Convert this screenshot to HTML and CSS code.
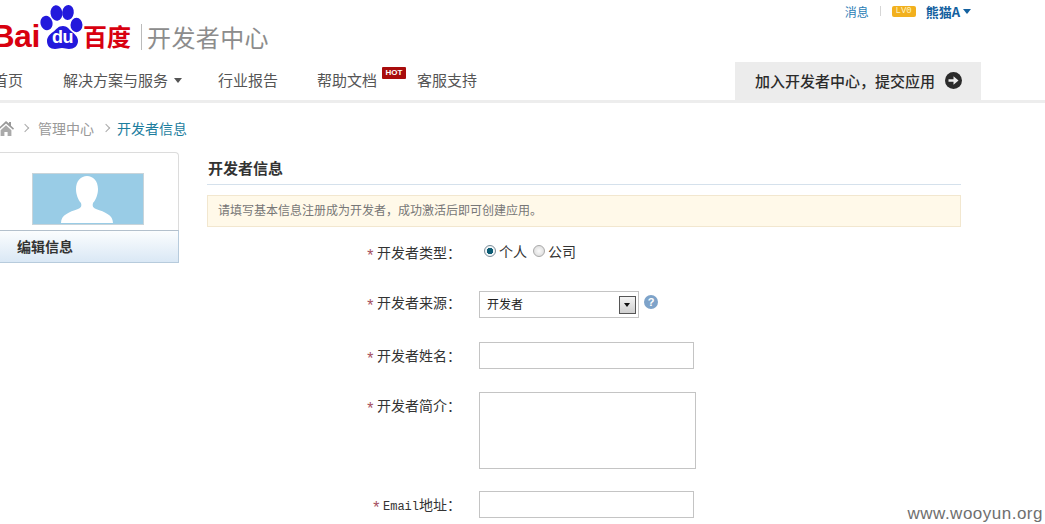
FILE: index.html
```html
<!DOCTYPE html>
<html lang="zh-CN">
<head>
<meta charset="utf-8">
<title>开发者信息</title>
<link rel="stylesheet" href="styles.css">
</head>
<body>
<header class="header">
  <div class="wrap">
    <div class="top">
      <a class="logo">
        <span class="logo-bai">Bai</span>
        <svg class="paw" width="44" height="46" viewBox="0 0 44 46" aria-hidden="true">
          <ellipse cx="6.5" cy="20" rx="6" ry="7.2" fill="#2319dc" transform="rotate(-14 6.5 20)"/>
          <ellipse cx="16.5" cy="10" rx="6" ry="7.8" fill="#2319dc" transform="rotate(-8 16.5 10)"/>
          <ellipse cx="28" cy="9.5" rx="5.8" ry="7.6" fill="#2319dc" transform="rotate(6 28 9.5)"/>
          <ellipse cx="36.5" cy="22" rx="6" ry="7.2" fill="#2319dc"/>
          <path d="M23 23c4 0 6 3 8 5 4 3 7 6 7 10 0 5-4 8-9 8-3 0-4-1-7-1s-4 1-7 1c-5 0-8-3-8-8 0-4 3-7 6-9 4-3 5-6 10-6z" fill="#2319dc"/>
          <text x="22.5" y="40" class="paw-du">du</text>
        </svg>
        <span class="logo-cn">百度</span>
        <span class="logo-title">开发者中心</span>
      </a>
      <div class="user">
        <a class="msg">消息</a>
        <i class="user-sep"></i>
        <span class="lv">LV0</span>
        <a class="uname">熊猫A</a>
        <i class="caret caret-blue"></i>
      </div>
    </div>
    <nav class="nav">
      <a class="nav-item nav-home">首页</a>
      <a class="nav-item nav-solve">解决方案与服务<i class="caret caret-gray"></i></a>
      <a class="nav-item nav-report">行业报告</a>
      <a class="nav-item nav-help">帮助文档<span class="hot">HOT</span></a>
      <a class="nav-item nav-support">客服支持</a>
      <a class="cta">加入开发者中心，提交应用
        <svg class="cta-icon" width="17" height="17" viewBox="0 0 17 17" aria-hidden="true">
          <circle cx="8.5" cy="8.5" r="8.5" fill="#2b2b2b"/>
          <path d="M3.5 7.2h5V4.2l5 4.3-5 4.3v-3h-5z" fill="#ececec"/>
        </svg>
      </a>
    </nav>
  </div>
</header>

<div class="wrap">
  <div class="crumb">
    <svg class="home" width="16" height="16" viewBox="0 0 16 16" aria-hidden="true">
      <path d="M8 1 0 8.5l1 1.2L8 3.4l7 6.3 1-1.2-3-2.8V2h-2v1.6z" fill="#999"/>
      <path d="M2.6 10.2 8 5.3l5.4 4.9V16H9.6v-4H6.4v4H2.6z" fill="#aaa"/>
    </svg>
    <span class="crumb-sep"></span>
    <a class="crumb-link">管理中心</a>
    <span class="crumb-sep"></span>
    <span class="crumb-now">开发者信息</span>
  </div>

  <div class="content">
    <aside class="side">
      <div class="side-photo">
        <div class="avatar">
          <svg width="110" height="49" viewBox="0 0 110 49" aria-hidden="true">
            <path d="M28 49c0-8 8-11 17-14 3-1 4-3 3-6-3-3-5-9-5-14 0-8 5-13 11-13s11 5 11 13c0 5-2 11-5 14-1 3 0 5 3 6 9 3 17 6 17 14z" fill="#fff"/>
          </svg>
        </div>
      </div>
      <a class="side-item">编辑信息</a>
    </aside>

    <main class="main">
      <h2 class="title">开发者信息</h2>
      <p class="notice">请填写基本信息注册成为开发者，成功激活后即可创建应用。</p>
      <form class="form">
        <div class="row row-type">
          <label class="label"><b>*</b>开发者类型：</label>
          <div class="radios">
            <span class="radio radio-on"></span><span>个人</span>
            <span class="radio"></span><span>公司</span>
          </div>
        </div>
        <div class="row row-source">
          <label class="label"><b>*</b>开发者来源：</label>
          <div class="select">
            <span class="select-text">开发者</span>
            <i class="select-btn"></i>
          </div>
          <span class="help">?</span>
        </div>
        <div class="row row-name">
          <label class="label"><b>*</b>开发者姓名：</label>
          <div class="input"></div>
        </div>
        <div class="row row-intro">
          <label class="label"><b>*</b>开发者简介：</label>
          <div class="textarea"></div>
        </div>
        <div class="row row-email">
          <label class="label"><b>*</b><span class="mono">Email</span>地址：</label>
          <div class="input"></div>
        </div>
      </form>
    </main>
  </div>
</div>
<div class="watermark">www.wooyun.org</div>
</body>
</html>
```
FILE: styles.css
```css
* { box-sizing: border-box; }
html, body { margin: 0; height: 524px; overflow: hidden; background: #fff; }
body {
  font-family: "Noto Sans CJK SC", "Liberation Sans", sans-serif;
  color: #333;
  font-size: 14px;
  position: relative;
}
i { display: block; }
.wrap { width: 1000px; margin-left: -19px; }

.header { height: 103px; border-bottom: 3px solid #ededed; }
.top { height: 62px; display: flex; justify-content: space-between; align-items: flex-start; }

.logo { display: flex; align-items: flex-start; height: 62px; }
.logo-bai { font: 700 32px/30px "Liberation Sans", sans-serif; color: #d8000f; margin-top: 21px; letter-spacing: -0.4px; width: 59px; text-align: right; flex: none; }
.paw { flex: none; margin-top: 3px; }
.logo-cn { font: 700 24px/30px "Noto Sans CJK SC", sans-serif; color: #d8000f; margin-top: 21px; margin-left: -1px; }
.paw-du { font: 700 18px "Liberation Sans", sans-serif; fill: #fff; text-anchor: middle; letter-spacing: -.5px; }
.logo-title { font-size: 24px; line-height: 26px; letter-spacing: .4px; color: #8c8c8c; margin: 24px 0 0 10px; padding-left: 5px; border-left: 1px solid #bbb; white-space: nowrap; }

.user { display: flex; align-items: center; height: 22px; margin-right: 10px; font-size: 12px; }
.msg { color: #2a7db5; }
.user-sep { width: 1px; height: 10px; background: #d6d6d6; margin: 0 11px; }
.lv { width: 24px; height: 11px; border-radius: 2px; background: #f2b01e; color: #fff3c0; font: 9px/11px "Liberation Mono", monospace; text-align: center; }
.uname { color: #14619f; font-weight: 700; font-size: 13px; margin-left: 10px; }
.caret { width: 0; height: 0; border-style: solid; border-color: transparent; }
.caret-blue { border-width: 5px 4px 0; border-top-color: #14619f; margin-left: 3px; }
.caret-gray { border-width: 5px 4.5px 0; border-top-color: #555; margin-left: 6px; }

.nav { display: flex; align-items: center; height: 38px; font-size: 15px; color: #555; }
.nav-item { display: flex; align-items: center; white-space: nowrap; line-height: 36px; padding-bottom: 2px; color: #555; }
.nav-home { margin-left: 12px; }
.nav-solve { margin-left: 40px; }
.nav-report { margin-left: 36px; }
.nav-help { margin-left: 39px; position: relative; }
.nav-support { margin-left: 40px; }
.hot { position: absolute; left: 65px; top: 5px; width: 24px; height: 12px; background: #a80c0c; color: #fff; font: 700 8px/12px "Liberation Sans", sans-serif; text-align: center; border-radius: 1px; }
.cta { margin-left: auto; width: 246px; height: 38px; background: #ececec; color: #2b2b2b; font-size: 15px; display: flex; align-items: center; padding: 0 0 2px 20px; gap: 10px; white-space: nowrap; font-weight: 500; }
.cta-icon { flex: none; }

.crumb { display: flex; align-items: center; height: 20px; margin-top: 15px; padding-left: 19px; color: #999; }
.home { margin-left: -2px; flex: none; }
.crumb-sep { width: 6px; height: 6px; border-top: 1px solid #aaa; border-right: 1px solid #aaa; transform: rotate(45deg); margin: 0 10px 0 8px; }
.crumb-link { color: #999; }
.crumb-now { color: #1c7d9e; }
.crumb-link + .crumb-sep { margin-left: 9px; margin-right: 8px; }

.content { display: flex; margin-top: 14px; }
.side { width: 198px; flex: none; }
.side-photo { height: 78px; border: 1px solid #dcdcdc; border-bottom: 0; border-radius: 0 4px 0 0; padding: 20px 0 0 50px; }
.avatar { width: 112px; height: 52px; border: 1px solid #c8d4da; background: #99cce6; overflow: hidden; }
.avatar svg { display: block; }
.side-item { display: block; height: 33px; border: 1px solid #b7cbdc; border-top-color: #b3c0cc; background: linear-gradient(#fbfdfe, #dae8f5); font-weight: 700; font-size: 14px; line-height: 31px; padding-left: 35px; color: #333; }

.main { width: 754px; margin-left: 28px; flex: none; }
.title { margin: 0; height: 33px; font-size: 15px; line-height: 32px; font-weight: 700; color: #333; padding-left: 1px; border-bottom: 1px solid #d5e1ec; }
.notice { margin: 10px 0 0; height: 32px; border: 1px solid #f2e7cf; background: #fff9e9; color: #777; font-size: 12px; line-height: 28px; padding-left: 10px; }

.row { display: flex; align-items: flex-start; }
.label { width: 272px; flex: none; padding-right: 18px; text-align: right; font-size: 14px; line-height: 27px; color: #333; white-space: nowrap; }
.label b { color: #a5505f; font-weight: 400; font-size: 16px; margin-right: 2px; font-family: "Liberation Mono", monospace; vertical-align: -3px; line-height: 1; }
.mono { font: 12px "Liberation Mono", monospace; }

.row-type { margin-top: 12px; height: 27px; }
.row-source { margin-top: 25px; height: 27px; }
.row-source .label { line-height: 23px; }
.row-name { margin-top: 24px; height: 27px; }
.row-intro { margin-top: 23px; height: 77px; }
.row-email { margin-top: 22px; height: 27px; }

.radios { display: flex; align-items: center; height: 24px; margin-left: 5px; }
.radio { width: 12px; height: 12px; border-radius: 50%; border: 1px solid #a9a9a9; background: radial-gradient(#fafafa, #d6d6d6); margin-right: 3px; }
.radios span + .radio { margin-left: 6px; }
.radio-on { background: radial-gradient(circle, #0d5c74 0 3px, #f2f6f8 3.5px); border-color: #7a8c98; }

.select { width: 160px; height: 27px; border: 1px solid #c4c4c4; display: flex; align-items: center; justify-content: space-between; font-size: 12px; padding: 0 2px 0 7px; color: #222; background: #fff; }
.select-text { padding-bottom: 2px; }
.select-btn { width: 17px; height: 18px; border: 1px solid #555; background: linear-gradient(#f4f4f4, #cfcfcf); position: relative; }
.select-btn::after { content: ""; position: absolute; left: 4px; top: 6px; border-style: solid; border-color: #111 transparent transparent; border-width: 4px 3.5px 0; }
.help { width: 14px; height: 14px; margin: 4px 0 0 5px; border-radius: 50%; background: #7ea3c9; color: #fff; font: 700 11px/14px "Liberation Sans", sans-serif; text-align: center; }

.input { width: 215px; height: 27px; border: 1px solid #c4c4c4; background: #fff; }
.textarea { width: 217px; height: 77px; border: 1px solid #c4c4c4; background: #fff; }

.watermark { position: absolute; right: 2px; bottom: 0; font: 17px/20px "Liberation Sans", sans-serif; letter-spacing: .5px; color: #6f6f6f; background: #fff; padding-left: 3px; }
```
